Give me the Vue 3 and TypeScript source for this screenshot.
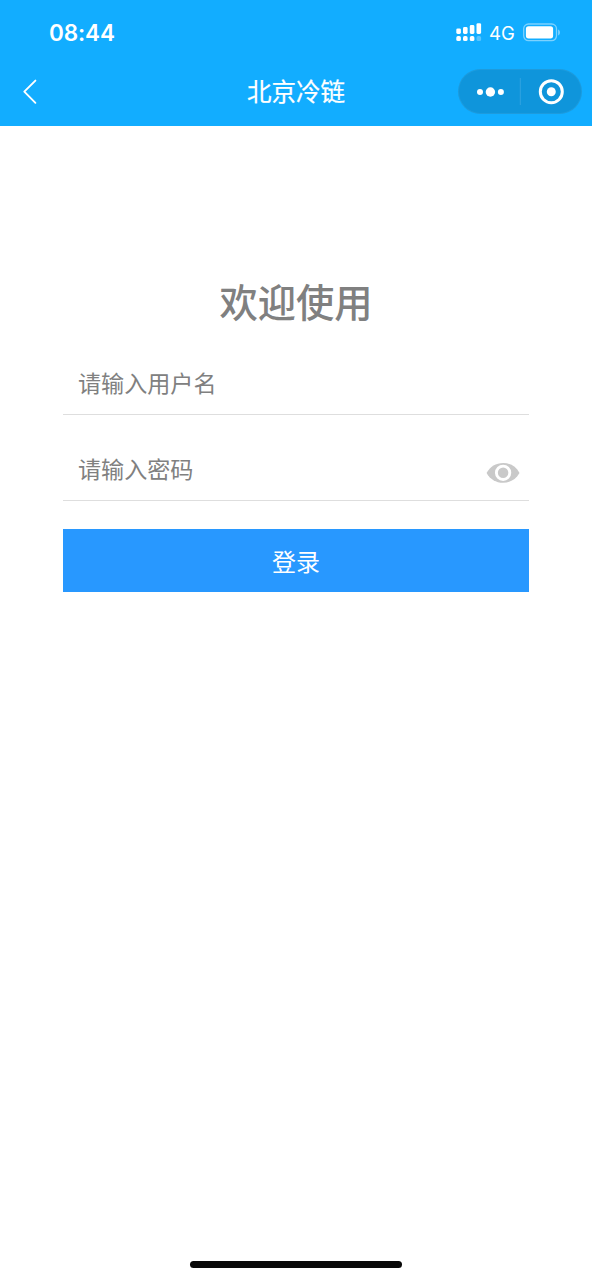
<script setup lang="ts">
import { ref } from 'vue'

const username = ref<string>('')
const password = ref<string>('')
const visible = ref<boolean>(false)
</script>

<template>
  <div class="screen">
    <header class="header">
      <div class="status">
        <span class="time">08:44</span>
        <div class="indicators">
          <svg class="signal" width="26" height="20" viewBox="0 0 26 20" fill="#fff">
            <rect x="0.3" y="5.4" width="4.6" height="5.6" rx="1.4" />
            <rect x="7" y="4" width="4.6" height="7" rx="1.4" />
            <rect x="13.8" y="2" width="4.6" height="9" rx="1.4" />
            <rect x="20.5" y="0.2" width="4.6" height="10.8" rx="1.4" />
            <rect x="0.3" y="13" width="4.6" height="5.1" rx="1.7" />
            <rect x="7" y="13" width="4.6" height="5.1" rx="1.7" />
            <rect x="13.8" y="13" width="4.6" height="5.1" rx="1.7" />
            <rect x="20.5" y="13" width="4.6" height="5.1" rx="1.7" opacity="0.3" />
          </svg>
          <span class="network">4G</span>
          <svg class="battery" width="39" height="20" viewBox="0 0 39 20">
            <rect x="0.7" y="1" width="32.8" height="16.6" rx="4.8" fill="none" stroke="#fff" stroke-opacity="0.45" stroke-width="1.3" />
            <rect x="2.9" y="3.2" width="27.2" height="12.2" rx="2.6" fill="#fff" />
            <path d="M35.2 6.4c2.2 1 2.2 5 0 6z" fill="#fff" fill-opacity="0.5" />
          </svg>
        </div>
      </div>
      <nav class="navbar">
        <svg class="back" width="16" height="26" viewBox="0 0 16 26" fill="none" stroke="#fff" stroke-width="1.9" stroke-linecap="round" stroke-linejoin="round">
          <path d="M13.4 1.6 2.3 12.7l11.1 11.1" />
        </svg>
        <h1 class="title">北京冷链</h1>
        <div class="capsule">
          <svg width="124" height="45" viewBox="0 0 124 45">
            <g fill="#fff">
              <circle cx="22" cy="23" r="3" />
              <circle cx="32.4" cy="23" r="4.7" />
              <circle cx="42.9" cy="23" r="3" />
              <circle cx="93.3" cy="22.7" r="4.5" />
            </g>
            <path d="M62.3 9v27" stroke="#fff" stroke-opacity="0.14" />
            <circle cx="93.3" cy="22.7" r="11" fill="none" stroke="#fff" stroke-width="3" />
          </svg>
        </div>
      </nav>
    </header>

    <main class="content">
      <h2 class="welcome">欢迎使用</h2>
      <form class="form" @submit.prevent>
        <div class="field">
          <input v-model="username" type="text" placeholder="请输入用户名" />
        </div>
        <div class="field">
          <input v-model="password" :type="visible ? 'text' : 'password'" placeholder="请输入密码" />
          <svg class="eye" width="34" height="22" viewBox="0 0 34 22" @click="visible = !visible">
            <path d="M.6 11C4 4.6 10 1 17.1 1s13 3.6 16.4 10C30 17.2 24.2 20.8 17.1 20.8S4 17.2.6 11z" fill="#c9c9c9" />
            <circle cx="17.1" cy="10.8" r="6.7" fill="#c9c9c9" stroke="#fff" stroke-width="2.9" />
          </svg>
        </div>
        <button class="login" type="submit">登录</button>
      </form>
    </main>

    <div class="home-indicator"></div>
  </div>
</template>

<style>
body {
  margin: 0;
  background: #fff;
}
</style>

<style scoped>
.screen {
  display: flex;
  flex-direction: column;
  box-sizing: border-box;
  width: 592px;
  height: 1280px;
  overflow: hidden;
  background: #fff;
  font-family: "Noto Sans CJK SC", sans-serif;
}

.header {
  height: 126px;
  flex: none;
  background: #12adff;
  color: #fff;
}

.status {
  display: flex;
  justify-content: space-between;
  align-items: center;
  height: 66px;
  box-sizing: border-box;
  padding: 0 30px 0 49px;
  font-family: Inter, sans-serif;
}

.time {
  margin-bottom: 2px;
  font-size: 22.5px;
  font-weight: 600;
  letter-spacing: -0.1px;
}

.indicators {
  display: flex;
  align-items: center;
  width: 106px;
  height: 20px;
}

.signal {
  flex: none;
}

.network {
  width: 26px;
  margin: 0 8px 0 7px;
  font-size: 18.5px;
  line-height: 20px;
}

.battery {
  flex: none;
}

.navbar {
  display: grid;
  grid-template-columns: 134px 1fr 134px;
  align-items: center;
  height: 51px;
}

.back {
  margin-left: 22px;
}

.title {
  margin: 0 0 1px;
  text-align: center;
  font-size: 24.5px;
  line-height: 36px;
  font-weight: 400;
  -webkit-text-stroke: 0.25px #fff;
}

.capsule {
  width: 124px;
  height: 45px;
  border-radius: 23px;
  background: #0f95db;
  box-shadow: inset 0 0 0 1px rgba(255, 255, 255, 0.06);
}

.capsule svg {
  display: block;
}

.content {
  flex: 1;
  padding: 147px 63px 0;
}

.welcome {
  margin: 0;
  text-align: center;
  color: #808080;
  font-size: 38.3px;
  line-height: 56px;
  font-weight: 500;
}

.form {
  margin-top: 24px;
}

.field {
  display: flex;
  align-items: center;
  box-sizing: border-box;
  height: 62px;
  padding: 0 9px 0 15px;
  border-bottom: 1px solid #dedede;
}

.field + .field {
  margin-top: 24px;
}

.field input {
  flex: 1;
  min-width: 0;
  height: 40px;
  margin-bottom: 3px;
  padding: 0;
  border: 0;
  outline: 0;
  background: transparent;
  color: #333;
  font: 400 23.1px "Noto Sans CJK SC", sans-serif;
}

.field input::placeholder {
  color: #808080;
  opacity: 1;
}

.eye {
  flex: none;
  margin-top: 6px;
}

.login {
  display: block;
  width: 100%;
  height: 63px;
  margin-top: 28.4px;
  padding: 1px 0 0;
  border: 0;
  background: #2898ff;
  color: #fff;
  font: 400 24px/36px "Noto Sans CJK SC", sans-serif;
}

.home-indicator {
  flex: none;
  align-self: center;
  width: 212px;
  height: 7px;
  margin-bottom: 12px;
  border-radius: 4px;
  background: #080808;
}
</style>
